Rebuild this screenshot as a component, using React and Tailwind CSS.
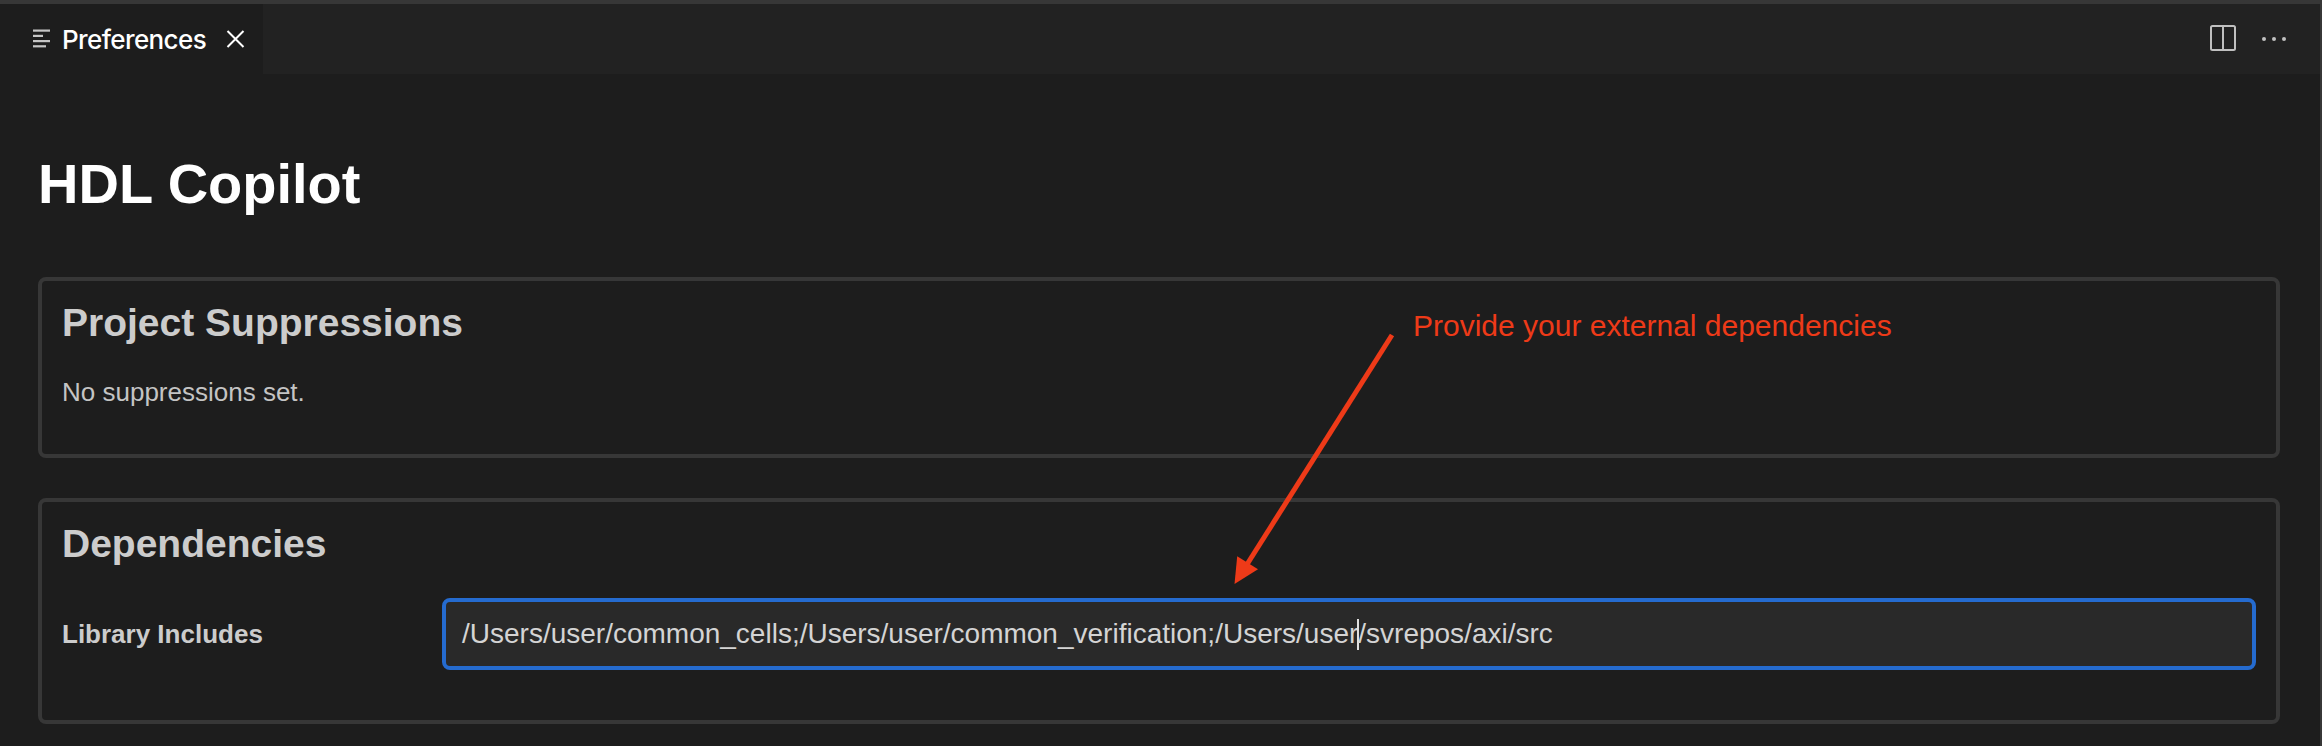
function PreviewIcon() {
  return (
    <svg className="mt-[21px] block h-[28px] w-[22px] shrink-0" viewBox="0 0 22 28" fill="#c5c5c5">
      <rect x="1" y="4.5" width="17" height="2.2" />
      <rect x="1" y="9.8" width="10" height="2.2" />
      <rect x="1" y="15" width="17" height="2.2" />
      <rect x="1" y="20.2" width="13" height="2.2" />
    </svg>
  );
}

function Card({ title, className, children }) {
  return (
    <section className={"rounded-[8px] border-4 border-[#373737] px-[20px] " + className}>
      <h2 className="pt-[17px] text-[39px] leading-[50px] font-bold whitespace-nowrap text-[#cccccc]">{title}</h2>
      {children}
    </section>
  );
}

function Annotation() {
  return (
    <>
      <svg className="absolute top-[326px] left-[1225px] h-[260px] w-[180px]" viewBox="1225 330 180 260">
        <path d="M1392 335L1246 566" stroke="#ee3a18" strokeWidth="5" fill="none" />
        <path d="M1234.5 584L1237.2 556.2L1258 569.3Z" fill="#ee3a18" />
      </svg>
      <div className="absolute top-[302px] left-[1413px] text-[30px] leading-[40px] whitespace-nowrap text-[#ee3a18]">
        Provide your external dependencies
      </div>
    </>
  );
}

export default function App() {
  return (
    <div className="relative flex h-[746px] w-[2322px] flex-col overflow-hidden border-t-4 border-r-2 border-[#373737] bg-[#1d1d1d] font-['Liberation_Sans',Arial,sans-serif]">
      <header className="flex h-[70px] shrink-0 bg-[#222222]">
        <div className="flex w-[263px] bg-[#1d1d1d] pl-[32px] font-[Inter,sans-serif]">
          <PreviewIcon />
          <span className="ml-[8px] w-[146px] pt-[16px] text-[26px] leading-[40px] font-medium tracking-[-0.6px] whitespace-nowrap text-white">
            Preferences
          </span>
          <svg className="mt-[25px] ml-[18px] block h-[20px] w-[20px]" viewBox="0 0 20 20" stroke="#ffffff" strokeWidth="2">
            <path d="M1.5 2L17.5 18M17.5 2L1.5 18" />
          </svg>
        </div>
        <div className="ml-auto flex pt-[20px] pr-[31px]">
          <svg className="block h-[28px] w-[28px]" viewBox="0 0 28 28" fill="none" stroke="#c0c0c0" strokeWidth="2">
            <rect x="2" y="2" width="24" height="24" rx="1.5" />
            <path d="M14 2V26" />
          </svg>
          <svg className="ml-[24px] block h-[28px] w-[28px]" viewBox="0 0 28 28" fill="#c0c0c0">
            <circle cx="3" cy="15" r="2" />
            <circle cx="13" cy="15" r="2" />
            <circle cx="23" cy="15" r="2" />
          </svg>
        </div>
      </header>
      <main className="flex flex-col pr-[40px] pl-[38px]">
        <h1 className="mt-[78px] text-[56px] leading-[64px] font-bold whitespace-nowrap text-white">HDL Copilot</h1>
        <Card title="Project Suppressions" className="mt-[61px] h-[181px]">
          <p className="mt-[28px] text-[26px] leading-[32px] whitespace-nowrap text-[#c4c4c4]">No suppressions set.</p>
        </Card>
        <Card title="Dependencies" className="mt-[40px] h-[226px]">
          <div className="mt-[29px] flex h-[72px] items-center">
            <label className="w-[380px] shrink-0 text-[26px] font-bold whitespace-nowrap text-[#cccccc]">Library Includes</label>
            <div className="flex h-[72px] flex-1 items-center rounded-[8px] border-4 border-[#256bcf] bg-[#292929] px-[16px] text-[28px] whitespace-pre text-[#d4d4d4]">
              <span>/Users/user/common_cells;/Users/user/common_verification;/Users/user</span>
              <span className="-mx-px h-[31px] w-[2px] bg-[#e0e0e0]" />
              <span>/svrepos/axi/src</span>
            </div>
          </div>
        </Card>
      </main>
      <Annotation />
    </div>
  );
}
